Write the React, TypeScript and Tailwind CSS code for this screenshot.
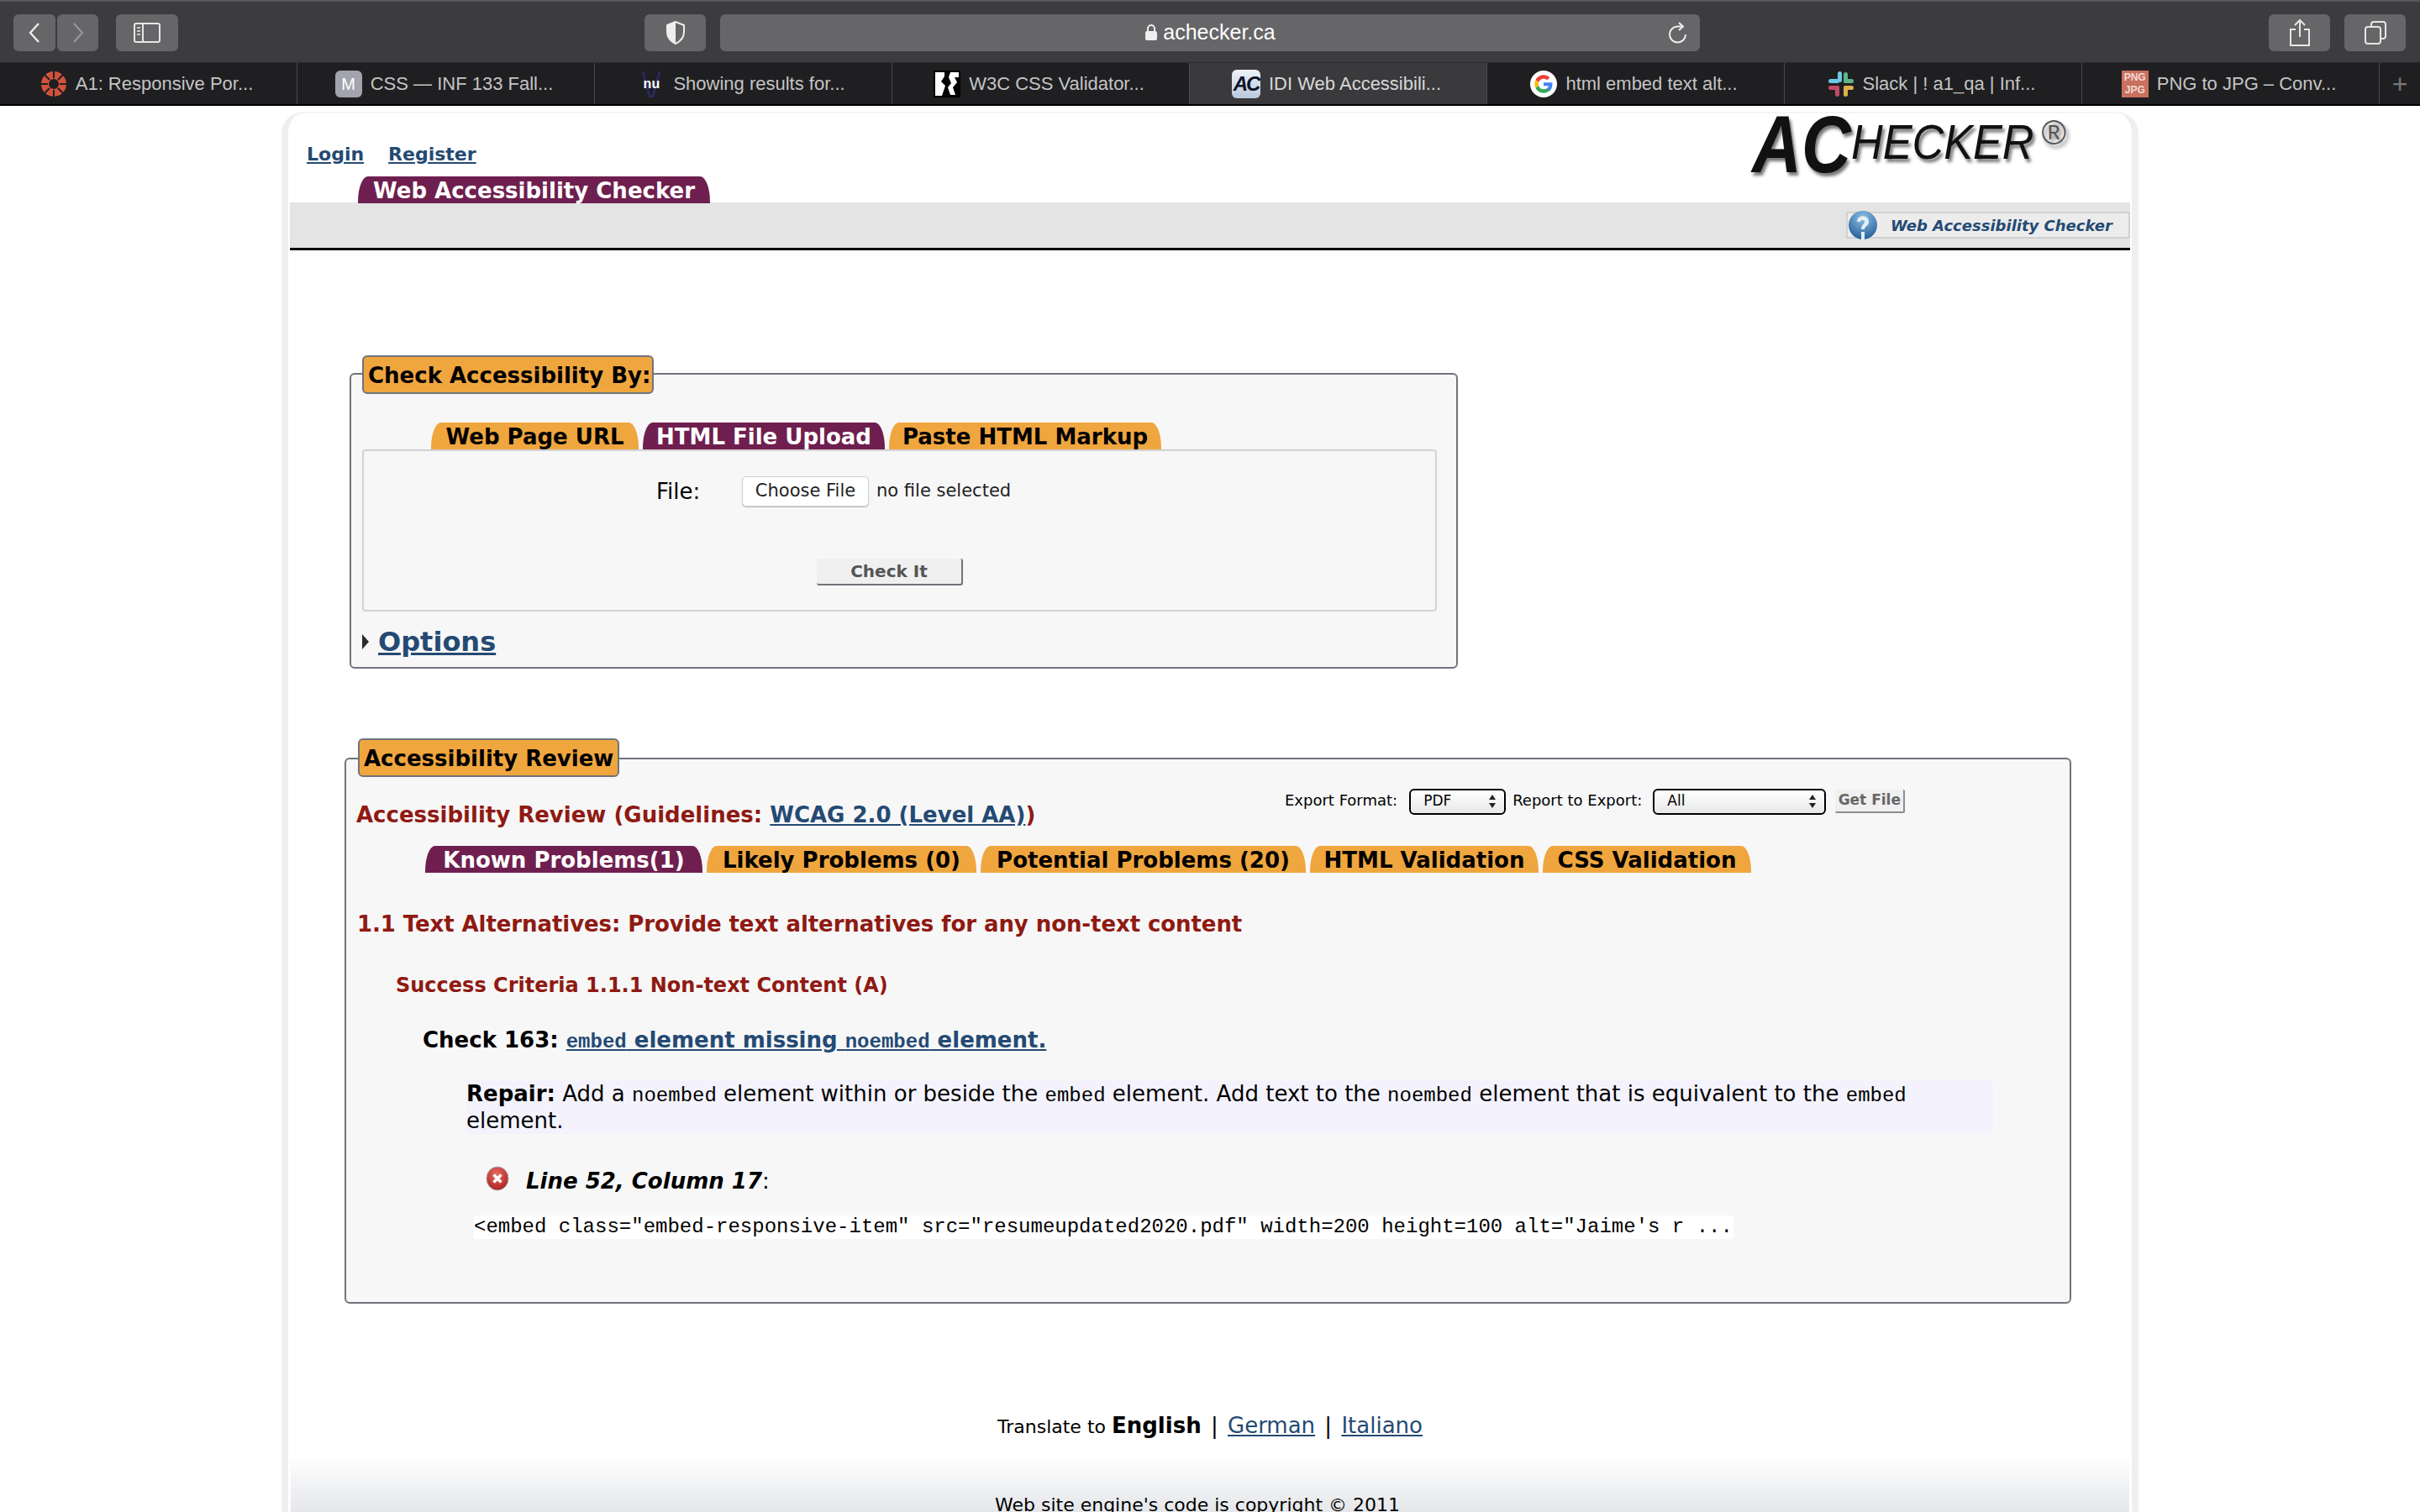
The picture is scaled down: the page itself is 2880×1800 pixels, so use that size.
// @ts-nocheck
import React from "react";

const browserTabs = [
  { title: "A1: Responsive Por...", icon: "canvas" },
  { title: "CSS — INF 133 Fall...", icon: "m" },
  { title: "Showing results for...", icon: "nu" },
  { title: "W3C CSS Validator...", icon: "w3c" },
  { title: "IDI Web Accessibili...", icon: "ac", active: true },
  { title: "html embed text alt...", icon: "google" },
  { title: "Slack | ! a1_qa | Inf...", icon: "slack" },
  { title: "PNG to JPG – Conv...", icon: "png" },
];

const TabIcon = ({ type }: { type: string }) => {
  if (type === "canvas")
    return (
      <svg width="32" height="32" viewBox="0 0 32 32" className="shrink-0">
        <circle cx="16" cy="16" r="15" fill="#d2523c" />
        <circle cx="16" cy="16" r="6" fill="#1f1f21" />
        <path d="M16 1v8M16 23v8M1 16h8M23 16h8M5 5l6 6M21 21l6 6M27 5l-6 6M11 21l-6 6" stroke="#1f1f21" strokeWidth="2" />
      </svg>
    );
  if (type === "m")
    return (
      <div className="flex h-[32px] w-[32px] shrink-0 items-center justify-center rounded-[6px] bg-[#a3a3ad] text-[20px] text-white">M</div>
    );
  if (type === "nu")
    return (
      <div className="relative flex h-[32px] w-[32px] shrink-0 items-center justify-center">
        <svg width="32" height="32" viewBox="0 0 32 32" className="absolute left-0 top-0">
          <path d="M6 1l8 30h4l8-30" fill="none" stroke="#2a2a5c" strokeWidth="3" />
        </svg>
        <span className="relative text-[16px] font-bold text-white">nu</span>
      </div>
    );
  if (type === "w3c")
    return (
      <svg width="32" height="32" viewBox="0 0 32 32" className="shrink-0">
        <rect width="32" height="32" fill="#000" />
        <path d="M2 2h11v5l-4 6 5 5-4 12H2zM20 2h10v6h-5l3 6-5 6 3 9h-6l-3-9 4-5-3-7z" fill="#fff" />
      </svg>
    );
  if (type === "ac")
    return (
      <div className="flex h-[34px] w-[34px] shrink-0 items-center justify-center rounded-[6px] bg-gradient-to-b from-[#eef2f8] to-[#b9c8de] text-[24px] font-bold italic tracking-[-2px] text-[#0c1428] [font-family:'Liberation_Sans',sans-serif]">AC</div>
    );
  if (type === "google")
    return (
      <svg width="32" height="32" viewBox="0 0 48 48" className="shrink-0">
        <circle cx="24" cy="24" r="24" fill="#fff" />
        <path fill="#EA4335" d="M24 14.5c2.6 0 4.700.9 6.400 2.500l4.700-4.700C32.200 9.600 28.500 8 24 8c-6.300 0-11.700 3.600-14.300 8.800l5.500 4.300C16.500 17.200 19.900 14.500 24 14.500z" />
        <path fill="#4285F4" d="M39.700 24.400c0-1.200-.1-2-.3-3H24v6h8.800c-.4 2.200-1.700 4-3.500 5.200l5.400 4.200c3.100-2.900 5-7.200 5-12.400z" />
        <path fill="#FBBC05" d="M15.200 26.900c-.3-.9-.5-1.900-.5-2.900s.2-2 .5-2.900l-5.500-4.300C8.600 19 8 21.400 8 24s.6 5 1.700 7.200z" />
        <path fill="#34A853" d="M24 40c4.300 0 8-1.400 10.700-3.900l-5.400-4.200c-1.400 1-3.200 1.600-5.300 1.600-4.100 0-7.500-2.700-8.800-6.600l-5.500 4.300C12.300 36.400 17.700 40 24 40z" />
      </svg>
    );
  if (type === "slack")
    return (
      <svg width="32" height="32" viewBox="0 0 32 32" className="shrink-0">
        <rect x="12" y="1" width="5" height="13" rx="2.500" fill="#6ec6e6" />
        <rect x="1" y="10" width="13" height="5" rx="2.500" fill="#6ec6e6" />
        <rect x="19" y="2" width="5" height="13" rx="2.500" fill="#5fb58c" />
        <rect x="19" y="10" width="12" height="5" rx="2.500" fill="#5fb58c" />
        <rect x="19" y="18" width="5" height="13" rx="2.500" fill="#dcb14a" />
        <rect x="19" y="18" width="12" height="5" rx="2.500" fill="#dcb14a" />
        <rect x="1" y="18" width="13" height="5" rx="2.500" fill="#c24a66" />
        <rect x="9" y="18" width="5" height="13" rx="2.500" fill="#c24a66" />
      </svg>
    );
  return (
    <div className="flex h-[32px] w-[32px] shrink-0 flex-col items-center justify-center bg-[#c9705e] text-[12px] font-bold leading-[15px] text-[#f3d9d2]">
      <span>PNG</span>
      <span>JPG</span>
    </div>
  );
};

const ToolBtn = ({ className = "", children }: any) => (
  <div className={`flex h-[44px] items-center justify-center rounded-[6px] bg-[#666668] ${className}`}>{children}</div>
);

const BrowserChrome = () => (
  <div className="[font-family:'Liberation_Sans',sans-serif]">
    <div className="flex h-[75px] items-center border-t-2 border-b border-t-[#57575a] border-b-[#2a2a2c] bg-[#3c3c3e] pl-[16px] pr-[17px] pt-[1px]">
      <ToolBtn className="w-[50px]">
        <svg width="18" height="26" viewBox="0 0 18 26" fill="none" stroke="#f0f0f0" strokeWidth="2.2"><path d="M14 2 4 13l10 11" /></svg>
      </ToolBtn>
      <ToolBtn className="ml-[2px] w-[49px]">
        <svg width="18" height="26" viewBox="0 0 18 26" fill="none" stroke="#98989a" strokeWidth="2.2"><path d="m4 2 10 11L4 24" /></svg>
      </ToolBtn>
      <ToolBtn className="ml-[21px] w-[74px]">
        <svg width="32" height="24" viewBox="0 0 32 24" fill="none" stroke="#e6e6e6" strokeWidth="2"><rect x="1" y="1" width="30" height="22" rx="2" /><path d="M11 1v22" /><path d="M4 6h4M4 10h4M4 14h4" strokeWidth="1.500" /></svg>
      </ToolBtn>
      <ToolBtn className="ml-[555px] w-[73px]">
        <svg width="24" height="28" viewBox="0 0 24 28"><path d="M12 1 2 5v8c0 7 4 11 10 14 6-3 10-7 10-14V5z" fill="none" stroke="#eee" strokeWidth="2" /><path d="M12 1 2 5v8c0 7 4 11 10 14z" fill="#eee" /></svg>
      </ToolBtn>
      <ToolBtn className="relative ml-[17px] w-[1166px] bg-[#6f6f71] text-[25px] text-white">
        <svg width="16" height="20" viewBox="0 0 16 20" className="mr-[6px]" fill="#eee"><rect x="1" y="8" width="14" height="11" rx="2" /><path d="M4 8V5a4 4 0 0 1 8 0v3" fill="none" stroke="#eee" strokeWidth="2" /></svg>
        <span>achecker.ca</span>
        <svg width="26" height="28" viewBox="0 0 26 28" fill="none" stroke="#eee" strokeWidth="2" className="absolute right-[13px] top-[8px]"><path d="M22 16a9.500 9.500 0 1 1-9.500-9.500H18" /><path d="m14 2 5 4.500-5 4.500" /></svg>
      </ToolBtn>
      <ToolBtn className="ml-auto w-[73px]">
        <svg width="26" height="34" viewBox="0 0 26 34" fill="none" stroke="#e6e6e6" strokeWidth="2"><path d="M8 13H2v19h22V13h-6M13 22V2M7 8l6-6 6 6" /></svg>
      </ToolBtn>
      <ToolBtn className="ml-[17px] w-[73px]">
        <svg width="28" height="30" viewBox="0 0 28 30" fill="none" stroke="#e6e6e6" strokeWidth="2"><rect x="2" y="8" width="18" height="20" rx="3" /><path d="M9 8V5a3 3 0 0 1 3-3h11a3 3 0 0 1 3 3v14a3 3 0 0 1-3 3h-3" /></svg>
      </ToolBtn>
    </div>
    <div className="flex h-[51px] border-b-2 border-b-black bg-[#1f1f21] text-[22px] text-[#c4c4c4]">
      {browserTabs.map((t) => (
        <div key={t.title} className={`flex w-[354px] items-center justify-center gap-[10px] border-r border-r-[#4a4a4c] pr-[4px] ${t.active ? "bg-[#3a3a3c] text-[#d8d8d8]" : ""}`}>
          <TabIcon type={t.icon} />
          <span className="whitespace-nowrap">{t.title}</span>
        </div>
      ))}
      <div className="flex flex-1 items-center justify-center text-[32px] font-light text-[#77777a]">+</div>
    </div>
  </div>
);

const Tab = ({ active, children, className = "" }: any) => (
  <div className={`flex h-[32px] items-center justify-center whitespace-nowrap pt-[2px] [border-radius:12px_12px_0_0/30px_30px_0_0] text-[26px] font-bold leading-none ${active ? "bg-[#6f1f4f] text-white" : "bg-[#f0a63e] text-black"} ${className}`}>
    {children}
  </div>
);

const Legend = ({ children, className = "" }: any) => (
  <div className={`flex h-[46px] items-center whitespace-nowrap rounded-[6px] border-2 border-[#6f747c] bg-[#f0a63e] px-[5px] pt-[2px] text-[26px] font-bold text-black ${className}`}>
    {children}
  </div>
);

const Code = ({ children }: any) => <code className="text-[24px] leading-none [font-family:'Liberation_Mono',monospace]">{children}</code>;

const SelectBox = ({ label, className = "" }: any) => (
  <div className={`flex h-[31px] items-center justify-between rounded-[6px] border-2 border-black bg-gradient-to-b from-white to-[#e8e8e8] pl-[15px] pr-[9px] text-[17px] ${className}`}>
    <span>{label}</span>
    <svg width="10" height="18" viewBox="0 0 10 18" fill="#222"><path d="M5 1 9 7H1zM5 17 1 11h8z" /></svg>
  </div>
);

const CheckForm = () => (
  <div className="relative ml-[73px] mt-[146px] h-[352px] w-[1319px] rounded-[6px] border-2 border-[#6f747c] bg-[#f7f7f8]">
    <Legend className="absolute left-[13px] top-[-23px] w-[347px]">Check Accessibility By:</Legend>
    <div className="ml-[95px] mt-[57px] flex gap-[5px]">
      <Tab className="w-[247px]">Web Page URL</Tab>
      <Tab active className="w-[288px]">HTML File Upload</Tab>
      <Tab className="w-[324px]">Paste HTML Markup</Tab>
    </div>
    <div className="ml-[13px] h-[193px] w-[1279px] rounded-[4px] border-2 border-[#d2d2d2] bg-[#f7f7f8]">
      <div className="ml-[348px] mt-[30px] flex h-[36px] items-center">
        <span className="w-[102px] text-[26px]">File:</span>
        <div className="flex h-[36px] w-[151px] items-center justify-center rounded-[5px] border border-[#cfcfcf] bg-white text-[21px] text-[#222] shadow-[0_1px_1px_#bbb]">Choose File</div>
        <span className="ml-[9px] text-[21px] text-[#222]">no file selected</span>
      </div>
      <div className="ml-[539px] mt-[62px] flex h-[32px] w-[174px] items-center justify-center rounded-[3px] border-b-2 border-r-2 border-[#70747a] bg-[#f0f0f0] text-[20px] font-bold text-[#555]">Check It</div>
    </div>
    <div className="ml-[12px] mt-[15px] flex items-center gap-[10px]">
      <svg width="10" height="18" viewBox="0 0 10 18" fill="#2c2c2c"><path d="M1 0l8 9-8 9z" /></svg>
      <a className="text-[32px] font-bold leading-[42px] text-[#244a73] underline">Options</a>
    </div>
  </div>
);

const Review = () => (
  <div className="relative ml-[67px] mt-[106px] h-[650px] w-[2055px] rounded-[6px] border-2 border-[#6f747c] bg-[#f7f7f8]">
    <Legend className="absolute left-[14px] top-[-25px] w-[311px]">Accessibility Review</Legend>
    <div className="flex h-[103px] items-start pl-[12px]">
      <h2 className="mt-[49px] w-[1105px] whitespace-nowrap text-[26px] font-bold leading-[34px] text-[#8f1a12]">
        Accessibility Review (Guidelines: <a className="text-[#244a73] underline">WCAG 2.0 (Level AA)</a>)
      </h2>
      <div className="mt-[32px] flex h-[36px] items-center text-[18px]">
        <span className="mb-[4px]">Export Format:</span>
        <SelectBox label="PDF" className="ml-[14px] w-[115px]" />
        <span className="mb-[4px] ml-[8px]">Report to Export:</span>
        <SelectBox label="All" className="ml-[13px] w-[206px]" />
        <div className="ml-[11px] flex h-[28px] w-[83px] items-center justify-center rounded-[2px] border-b-2 border-r-2 border-[#8a8d92] bg-[#f0f0f0] text-[17px] font-bold text-[#666]">Get File</div>
      </div>
    </div>
    <div className="ml-[94px] flex gap-[5px]">
      <Tab active className="w-[330px]">Known Problems(1)</Tab>
      <Tab className="w-[321px]">Likely Problems (0)</Tab>
      <Tab className="w-[387px]">Potential Problems (20)</Tab>
      <Tab className="w-[272px]">HTML Validation</Tab>
      <Tab className="w-[248px]">CSS Validation</Tab>
    </div>
    <h3 className="ml-[13px] mt-[44px] whitespace-nowrap text-[26px] font-bold leading-[34px] tracking-[-0.08px] text-[#8f1a12]">
      1.1 Text Alternatives: Provide text alternatives for any non-text content
    </h3>
    <h4 className="ml-[59px] mt-[41px] whitespace-nowrap text-[24px] font-bold leading-[30px] text-[#8f1a12]">
      Success Criteria 1.1.1 Non-text Content (A)
    </h4>
    <div className="ml-[91px] mt-[31px] flex h-[36px] items-baseline whitespace-pre text-[26px] font-bold">
      <span>Check 163: </span>
      <a className="text-[#244a73] underline"><Code>embed</Code> element missing <Code>noembed</Code> element.</a>
    </div>
    <div className="ml-[143px] mt-[31px] w-[1817px] bg-[#f4f3fd] text-[26px] leading-[32px]">
      <b>Repair:</b> Add a <Code>noembed</Code> element within or beside the <Code>embed</Code> element. Add text to the <Code>noembed</Code> element that is equivalent to the <Code>embed</Code> element.
    </div>
    <div className="ml-[166px] mt-[37px] flex h-[38px] items-center text-[26px]">
      <svg width="28" height="30" viewBox="0 0 28 30" className="mb-[6px]">
        <defs>
          <radialGradient id="errGlow" cx="45%" cy="30%" r="75%">
            <stop offset="0%" stopColor="#e86a60" />
            <stop offset="100%" stopColor="#a81f1f" />
          </radialGradient>
        </defs>
        <ellipse cx="14" cy="15" rx="13" ry="14" fill="url(#errGlow)" stroke="#a8a8a8" />
        <path d="m9.500 10.500 9 9M18.500 10.500l-9 9" stroke="#fff" strokeWidth="3.500" />
      </svg>
      <b className="ml-[20px] italic">Line 52, Column 17</b>:
    </div>
    <div className="ml-[152px] mt-[22px] w-[1499px] whitespace-pre bg-white text-[24px] leading-[28px] [font-family:'Liberation_Mono',monospace]">
      {`<embed class="embed-responsive-item" src="resumeupdated2020.pdf" width=200 height=100 alt="Jaime's r ...`}
    </div>
  </div>
);

export default function App() {
  return (
    <div className="h-[1800px] w-[2880px] overflow-hidden bg-white text-black [font-family:'DejaVu_Sans',sans-serif]">
      <BrowserChrome />
      <div className="relative ml-[335px] mt-[7px] h-[1667px] w-[2210px] rounded-t-[26px] border-x-[8px] border-t-[2px] border-x-[#eef0f0] border-t-[#f4f4f4] bg-white">
        <div className="flex h-[106px] justify-between">
          <div className="relative pl-[22px] pt-[32px] text-[22px] font-bold text-[#244a73]">
            <a className="underline">Login</a>
            <a className="ml-[29px] underline">Register</a>
            <div className="absolute left-[83px] top-[75px] flex h-[32px] w-[419px] items-center justify-center pt-[2px] [border-radius:12px_12px_0_0/30px_30px_0_0] bg-[#6f1f4f] text-[26px] text-white whitespace-nowrap">Web Accessibility Checker</div>
          </div>
          <div className="mr-[78px] mt-[-8px] flex h-[90px] items-start whitespace-nowrap italic text-[#111] [font-family:'Liberation_Sans',sans-serif] [text-shadow:3px_4px_4px_#777]">
            <span className="block w-[118px] origin-left scale-x-[0.85] text-[96px] font-bold leading-[90px]">AC</span>
            <span className="mt-[13px] block w-[217px] origin-left scale-x-[0.9] text-[58px] leading-[58px]">HECKER</span>
            <span className="ml-[10px] mt-[8px] text-[40px] not-italic leading-[46px] text-[#555]">®</span>
          </div>
        </div>
        <div className="mx-[2px] flex h-[57px] items-center justify-end border-b-[3px] border-b-black bg-[#e4e4e4]">
          <div className="flex h-[32px] w-[338px] items-center border-2 border-[#d0d0d0] bg-[#ececec]">
            <svg width="36" height="36" viewBox="0 0 36 36" className="shrink-0">
              <defs>
                <radialGradient id="helpGlow" cx="50%" cy="25%" r="80%">
                  <stop offset="0%" stopColor="#8fc0e6" />
                  <stop offset="100%" stopColor="#1d5a94" />
                </radialGradient>
              </defs>
              <circle cx="18" cy="18" r="17" fill="url(#helpGlow)" />
              <path d="M11 14c0-9 14-9 14 0 0 5-5 5-5 9h-4c0-6 4-6 4-9 0-3-5-3-5 0z M16 26h4v9h-4z" fill="#e4eef6" />
            </svg>
            <span className="ml-[15px] whitespace-nowrap text-[18px] font-bold italic text-[#244a73]">Web Accessibility Checker</span>
          </div>
        </div>
        <CheckForm />
        <Review />
        <div className="mt-[126px] flex items-baseline justify-center whitespace-pre text-[22px]">
          Translate to <b className="text-[26px]">English</b><span className="mx-[3px] text-[26px]"> | </span><a className="text-[26px] text-[#244a73] underline">German</a><span className="mx-[3px] text-[26px]"> | </span><a className="text-[26px] text-[#244a73] underline">Italiano</a>
        </div>
        <div className="absolute inset-x-[3px] top-[1598px] h-[69px] bg-gradient-to-b from-white to-[#e4e6e9]" />
        <div className="relative mt-[58px] pr-[30px] text-center text-[22px]">Web site engine's code is copyright © 2011</div>
      </div>
    </div>
  );
}
